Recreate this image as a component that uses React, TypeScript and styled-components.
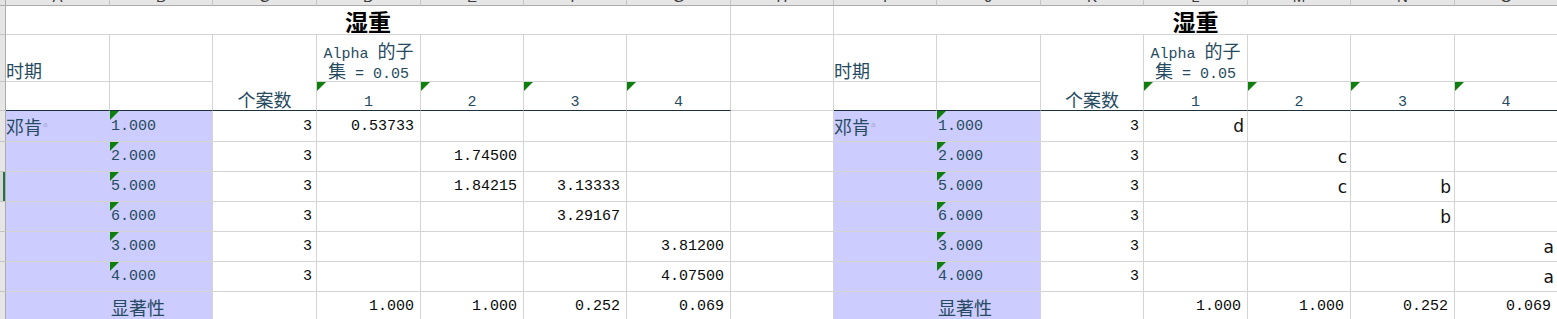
import React from "react";
import styled, { createGlobalStyle, css } from "styled-components";

const GRID = "#d4d4d4";
const FILL = "#ccccff";
const RULE = "#1c2f3c";
const SLATE = "#264a60";
const INK = "#0a0a0a";

const COLS = [104, 103, 104, 104, 103, 103, 104, 103, 103, 104, 103, 104, 103, 104, 103];
const LETTERS = "ABCDEFGHIJKLMNO".split("");

const GlobalStyle = createGlobalStyle`
  html, body { margin: 0; padding: 0; background: #ffffff; overflow: hidden; }
  body { font-family: "Liberation Mono", "Noto Sans CJK SC", monospace; }
`;

const Sheet = styled.div`
  display: grid;
  grid-template-columns: 6px ${COLS.map((w) => `${w}px`).join(" ")};
  grid-template-rows: 6px 29px 47px 29px 31px repeat(6, 30px);
  width: 1558px;
`;

const Corner = styled.div`
  box-sizing: border-box;
  background: #e2e2e2;
  border-right: 1px solid #ababab;
  border-bottom: 1px solid #ababab;
`;

const ColHead = styled.div`
  box-sizing: border-box;
  background: #e6e6e6;
  border-right: 1px solid #c4c4c4;
  border-bottom: 1px solid #ababab;
  overflow: hidden;
  display: flex;
  align-items: flex-end;
  justify-content: center;
  font-family: "Liberation Sans", sans-serif;
  font-size: 15px;
  line-height: 16px;
  color: #3c3c3c;
`;

const RowHead = styled.div<{ $selected?: boolean }>`
  box-sizing: border-box;
  background: #e6e6e6;
  border-right: 1px solid #ababab;
  border-bottom: 1px solid #c4c4c4;
  ${(p) =>
    p.$selected &&
    css`
      box-shadow: inset -2px 0 0 #217346;
      background: #d6d6d6;
    `}
`;

type Flex = "flex-start" | "center" | "flex-end";

const Cell = styled.div<{
  $h?: Flex;
  $v?: Flex;
  $span?: number;
  $rows?: number;
  $fill?: boolean;
  $rule?: boolean;
  $seam?: boolean;
  $padL?: number;
  $padR?: number;
}>`
  position: relative;
  box-sizing: border-box;
  min-width: 0;
  overflow: hidden;
  display: flex;
  justify-content: ${(p) => p.$h ?? "flex-start"};
  align-items: ${(p) => p.$v ?? "center"};
  padding: 0 ${(p) => p.$padR ?? 5}px 0 ${(p) => p.$padL ?? 2}px;
  grid-column: span ${(p) => p.$span ?? 1};
  grid-row: span ${(p) => p.$rows ?? 1};
  background: ${(p) => (p.$fill ? FILL : "#ffffff")};
  border-right: 1px solid ${(p) => (p.$seam ? FILL : GRID)};
  border-bottom: 1px solid ${(p) => (p.$rule ? RULE : GRID)};
  white-space: nowrap;
`;

const Flag = styled.span`
  position: absolute;
  top: 0;
  left: 0;
  width: 0;
  height: 0;
  border-top: 9px solid #0e7f0e;
  border-right: 9px solid transparent;
`;

const Title = styled.span`
  font-family: "Noto Sans CJK SC", sans-serif;
  font-weight: 700;
  font-size: 23px;
  line-height: 26px;
  color: #000000;
`;

const Label = styled.span<{ $lift?: boolean }>`
  font-family: "Noto Sans CJK SC", sans-serif;
  font-size: 18px;
  line-height: 20px;
  color: ${SLATE};
  margin-bottom: ${(p) => (p.$lift ? 1 : 0)}px;
`;

const Sup = styled.sup`
  font-family: "Liberation Sans", sans-serif;
  font-size: 8px;
  line-height: 0;
  color: #a9a9d6;
  margin-left: 1px;
  vertical-align: 7px;
`;

const Code = styled.span<{ $tone?: "label" | "value" }>`
  font-family: "Liberation Mono", monospace;
  font-size: 15px;
  line-height: 17px;
  color: ${(p) => (p.$tone === "label" ? SLATE : INK)};
`;

const ColumnNo = styled.span`
  font-family: "Liberation Mono", monospace;
  font-size: 15px;
  line-height: 15px;
  color: ${SLATE};
`;

const Mark = styled.span`
  font-family: "DejaVu Sans", sans-serif;
  font-size: 17px;
  line-height: 20px;
  color: #111111;
`;

const Stack = styled.div`
  display: flex;
  flex-direction: column;
  align-items: center;
  margin-bottom: 1px;
  font-family: "Liberation Mono", monospace;
  font-size: 15px;
  color: ${SLATE};
  white-space: pre;
`;

const StackLine = styled.div`
  height: 20px;
  line-height: 20px;
`;

const Cjk = styled.span`
  font-family: "Noto Sans CJK SC", sans-serif;
  font-size: 18px;
`;

type Group = { level: string; n: string; means: string[]; letters: string[] };

const GROUPS: Group[] = [
  { level: "1.000", n: "3", means: ["0.53733", "", "", ""], letters: ["d", "", "", ""] },
  { level: "2.000", n: "3", means: ["", "1.74500", "", ""], letters: ["", "c", "", ""] },
  { level: "5.000", n: "3", means: ["", "1.84215", "3.13333", ""], letters: ["", "c", "b", ""] },
  { level: "6.000", n: "3", means: ["", "", "3.29167", ""], letters: ["", "", "b", ""] },
  { level: "3.000", n: "3", means: ["", "", "", "3.81200"], letters: ["", "", "", "a"] },
  { level: "4.000", n: "3", means: ["", "", "", "4.07500"], letters: ["", "", "", "a"] },
];

const SIG = ["1.000", "1.000", "0.252", "0.069"];

type Kind = "means" | "letters";

const TitleCells = () => (
  <Cell $span={7} $h="center" $v="flex-end" $padL={0} $padR={0}>
    <Title>湿重</Title>
  </Cell>
);

const HeadTop = () => (
  <>
    <Cell $v="flex-end" $padL={0}>
      <Label $lift>时期</Label>
    </Cell>
    <Cell />
    <Cell $rows={2} $h="center" $v="flex-end" $rule $padL={0} $padR={0}>
      <Label $lift>个案数</Label>
    </Cell>
    <Cell $h="center" $v="flex-end" $padL={0} $padR={0}>
      <Stack>
        <StackLine>
          Alpha <Cjk>的子</Cjk>
        </StackLine>
        <StackLine>
          <Cjk>集</Cjk> = 0.05
        </StackLine>
      </Stack>
    </Cell>
    <Cell />
    <Cell />
    <Cell />
  </>
);

const HeadBottom = () => (
  <>
    <Cell $rule />
    <Cell $rule />
    {[1, 2, 3, 4].map((n) => (
      <Cell key={n} $h="center" $v="flex-end" $rule $padL={0} $padR={0}>
        <Flag />
        <ColumnNo>{n}</ColumnNo>
      </Cell>
    ))}
  </>
);

const DataCells = ({ kind, group, first }: { kind: Kind; group: Group; first: boolean }) => {
  const values = kind === "means" ? group.means : group.letters;
  return (
    <>
      <Cell $fill $seam $padL={0}>
        {first && (
          <Label>
            邓肯<Sup>a</Sup>
          </Label>
        )}
      </Cell>
      <Cell $fill $padL={1}>
        <Flag />
        <Code $tone="label">{group.level}</Code>
      </Cell>
      <Cell $h="flex-end" $padR={4}>
        <Code>{group.n}</Code>
      </Cell>
      {values.map((v, i) => (
        <Cell key={i} $h="flex-end" $padR={kind === "means" ? 6 : 3}>
          {v && (kind === "means" ? <Code>{v}</Code> : <Mark>{v}</Mark>)}
        </Cell>
      ))}
    </>
  );
};

const SigCells = () => (
  <>
    <Cell $fill $seam />
    <Cell $fill $padL={1}>
      <Label>显著性</Label>
    </Cell>
    <Cell />
    {SIG.map((v, i) => (
      <Cell key={i} $h="flex-end" $padR={6}>
        <Code>{v}</Code>
      </Cell>
    ))}
  </>
);

export default function App() {
  return (
    <>
      <GlobalStyle />
      <Sheet>
        <Corner />
        {LETTERS.map((l) => (
          <ColHead key={l}>{l}</ColHead>
        ))}

        <RowHead />
        <TitleCells />
        <Cell />
        <TitleCells />

        <RowHead />
        <HeadTop />
        <Cell />
        <HeadTop />

        <RowHead />
        <HeadBottom />
        <Cell />
        <HeadBottom />

        {GROUPS.map((g, i) => (
          <React.Fragment key={g.level}>
            <RowHead $selected={i === 2} />
            <DataCells kind="means" group={g} first={i === 0} />
            <Cell />
            <DataCells kind="letters" group={g} first={i === 0} />
          </React.Fragment>
        ))}

        <RowHead />
        <SigCells />
        <Cell />
        <SigCells />
      </Sheet>
    </>
  );
}
